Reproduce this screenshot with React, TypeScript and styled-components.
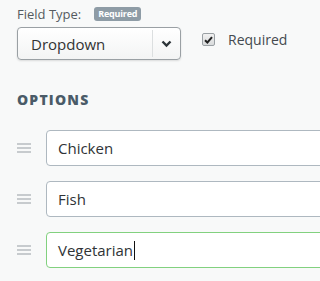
import React from "react";
import styled, { createGlobalStyle } from "styled-components";

const Global = createGlobalStyle`
  html, body { margin: 0; padding: 0; background: #f8f9f9; overflow: hidden; }
  body { font-family: "Open Sans", "Liberation Sans", sans-serif; }
`;

const Page = styled.div`
  width: 100vw;
  height: 100vh;
  overflow: hidden;
  padding: 5px 0 0 17px;
  box-sizing: border-box;
`;

const LabelRow = styled.div`
  display: flex;
  align-items: center;
  gap: 13px;
  height: 17px;
`;

const Label = styled.span`
  font-size: 13px;
  color: #555b60;
`;

const Badge = styled.span`
  display: inline-flex;
  align-items: center;
  height: 14px;
  padding: 0 4px;
  border-radius: 3px;
  background: #8e9ca6;
  color: #fff;
  font-size: 9px;
  font-weight: 700;
  letter-spacing: -0.2px;
`;

const ControlRow = styled.div`
  display: flex;
  align-items: center;
  margin-top: 5px;
`;

const Select = styled.div`
  display: flex;
  align-items: center;
  width: 164px;
  height: 33px;
  box-sizing: border-box;
  border: 1px solid #9aa0a4;
  border-radius: 4px;
  background: linear-gradient(#ffffff, #f3f4f4);
  box-shadow: 0 1px 2px rgba(0, 0, 0, 0.12);
`;

const SelectText = styled.span`
  flex: 1;
  padding-left: 13px;
  font-size: 15px;
  color: #333;
`;

const SelectButton = styled.span`
  display: flex;
  align-items: center;
  justify-content: center;
  width: 27px;
  height: 27px;
  border-left: 1px solid #dcdfe0;
`;

const CheckLabel = styled.label`
  display: flex;
  align-items: center;
  gap: 13px;
  margin-left: 21px;
  margin-top: -8px;
  font-size: 14px;
  color: #444a4f;
  white-space: nowrap;
`;

const Box = styled.span`
  display: inline-flex;
  align-items: center;
  justify-content: center;
  width: 11px;
  height: 11px;
  border: 1px solid #9aa0a4;
  border-radius: 2px;
  background: linear-gradient(#f1f1f1, #d9dbdc);
`;

const Heading = styled.h2`
  margin: 32px 0 0;
  font-family: "Open Sans", sans-serif;
  font-size: 14px;
  font-weight: 800;
  letter-spacing: 1.2px;
  color: #4a5b68;
  line-height: 16px;
`;

const List = styled.div`
  display: flex;
  flex-direction: column;
  gap: 15px;
  margin-top: 22px;
`;

const OptionRow = styled.div`
  display: flex;
  align-items: center;
  gap: 15px;
`;

const Handle = styled.span`
  display: flex;
  flex-direction: column;
  gap: 2px;
  width: 14px;
  flex-shrink: 0;
  & > i {
    display: block;
    height: 2px;
    background: #c7cbce;
  }
`;

const Input = styled.div<{ $focus?: boolean }>`
  display: flex;
  align-items: center;
  width: 400px;
  flex-shrink: 0;
  height: 36px;
  box-sizing: border-box;
  padding-left: 11px;
  background: #fff;
  border: 1px solid ${(p) => (p.$focus ? "#82d17f" : "#aeb8c0")};
  border-radius: 4px;
  font-size: 15px;
  color: #2f3336;
`;

const Caret = styled.span`
  display: inline-block;
  width: 1px;
  height: 19px;
  background: #111;
  margin-left: 1px;
`;

const options = ["Chicken", "Fish", "Vegetarian"];

export default function App() {
  return (
    <Page>
      <Global />
      <LabelRow>
        <Label>Field Type:</Label>
        <Badge>Required</Badge>
      </LabelRow>
      <ControlRow>
        <Select>
          <SelectText>Dropdown</SelectText>
          <SelectButton>
            <svg width="11" height="8" viewBox="0 0 11 8">
              <path d="M1.5 1.5 L5.5 5.5 L9.5 1.5" fill="none" stroke="#2c3338" strokeWidth="2.4" />
            </svg>
          </SelectButton>
        </Select>
        <CheckLabel>
          <Box>
            <svg width="9" height="8" viewBox="0 0 9 8">
              <path d="M1 4.2 L3.4 6.5 L8 1.2" fill="none" stroke="#222" strokeWidth="2" />
            </svg>
          </Box>
          Required
        </CheckLabel>
      </ControlRow>
      <Heading>OPTIONS</Heading>
      <List>
        {options.map((o, i) => (
          <OptionRow key={o}>
            <Handle>
              <i />
              <i />
              <i />
            </Handle>
            <Input $focus={i === options.length - 1}>
              {o}
              {i === options.length - 1 && <Caret />}
            </Input>
          </OptionRow>
        ))}
      </List>
    </Page>
  );
}
